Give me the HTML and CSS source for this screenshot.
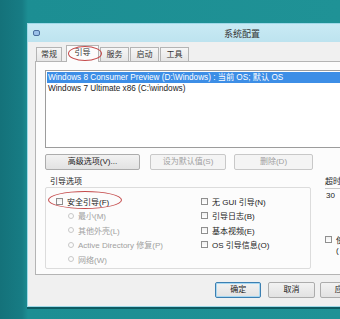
FILE: index.html
```html
<!DOCTYPE html>
<html lang="zh-CN">
<head>
    <meta charset="UTF-8">
    <title>系统配置</title>
    <link rel="stylesheet" href="styles.css">
</head>
<body>
    <div class="desktop">
        <div class="window">
            <div class="titlebar">
                <span class="app-icon"></span>
                <span class="title">系统配置</span>
            </div>

            <div class="tabs">
                <div class="tab">常规</div>
                <div class="tab tab-on">引导<span class="mark mark-tab"></span></div>
                <div class="tab">服务</div>
                <div class="tab">启动</div>
                <div class="tab">工具</div>
            </div>

            <div class="panel">
                <div class="boot-list">
                    <div class="boot-item selected">Windows 8 Consumer Preview (D:\Windows) : 当前 OS; 默认 OS</div>
                    <div class="boot-item">Windows 7 Ultimate x86 (C:\windows)</div>
                </div>

                <div class="btn-row">
                    <div class="btn btn-adv">高级选项(V)...</div>
                    <div class="btn btn-def disabled">设为默认值(S)</div>
                    <div class="btn btn-del disabled">删除(D)</div>
                </div>

                <div class="options">
                    <div class="group">
                        <div class="group-label">引导选项</div>
                        <div class="group-box">
                            <div class="col col-left">
                                <div class="opt opt-safe"><span class="chk"></span>安全引导(F)<span class="mark mark-safe"></span></div>
                                <div class="opt sub disabled"><span class="radio"></span>最小(M)</div>
                                <div class="opt sub disabled"><span class="radio"></span>其他外壳(L)</div>
                                <div class="opt sub disabled"><span class="radio"></span>Active Directory 修复(P)</div>
                                <div class="opt sub disabled"><span class="radio"></span>网络(W)</div>
                            </div>
                            <div class="col col-right">
                                <div class="opt"><span class="chk"></span>无 GUI 引导(N)</div>
                                <div class="opt"><span class="chk"></span>引导日志(B)</div>
                                <div class="opt"><span class="chk"></span>基本视频(E)</div>
                                <div class="opt"><span class="chk"></span>OS 引导信息(O)</div>
                            </div>
                        </div>
                    </div>
                    <div class="timeout">
                        <div class="timeout-label">超时</div>
                        <div class="timeout-box">30</div>
                        <div class="opt perm"><span class="chk"></span>使</div>
                        <div class="perm-2">(</div>
                    </div>
                </div>
            </div>

            <div class="footer">
                <div class="btn btn-ok">确定</div>
                <div class="btn btn-cancel">取消</div>
                <div class="btn btn-apply">应用</div>
            </div>
        </div>
    </div>
</body>
</html>
```

FILE: styles.css
```css
*{
    padding: 0;
    margin: 0;
    box-sizing: border-box;
}
body{
    width: 340px;
    height: 319px;
    overflow: hidden;
    background: linear-gradient(90deg, #14727a 0, #177c84 22px, #1c8e93 28px, #1f9296 100%);
    font-family: "Liberation Sans", "Noto Sans CJK SC", sans-serif;
    font-size: 8.5px;
    color: #222;
}
.desktop{
    padding: 23px 0 0 27px;
}
.window{
    width: 340px;
    height: 284px;
    background: #f0f0f0;
    border: 1px solid #9fd9e8;
    box-shadow: 0 2px 0 #0f5c63;
    display: flex;
    flex-direction: column;
}

/* title bar */
.titlebar{
    height: 18px;
    background: linear-gradient(#c9eaf4, #bde3ef);
    display: flex;
    align-items: center;
    padding-left: 5px;
}
.app-icon{
    width: 7px;
    height: 6px;
    border: 1px solid #4b6f9e;
    border-radius: 2px;
    background: #9bc0e8;
}
.title{
    margin-left: 184px;
    font-size: 9px;
    color: #333;
}

/* tabs */
.tabs{
    display: flex;
    align-items: flex-end;
    height: 20px;
    padding-left: 8px;
    margin-bottom: -1px;
}
.tab{
    height: 15px;
    line-height: 14px;
    border: 1px solid #b4b4b4;
    border-bottom: none;
    background: linear-gradient(#f6f6f6, #e4e4e4);
    margin-right: 1px;
    width: 29px;
    text-align: center;
    font-size: 8px;
    color: #333;
    white-space: nowrap;
}
.tab:first-child{
    width: 26px;
    margin-right: 4px;
}
.tab-on{
    position: relative;
    height: 17px;
    width: 33px;
    background: #fcfcfc;
    margin-right: 1px;
}
.mark{
    position: absolute;
    border: 1px solid #c4494a;
    border-radius: 50%;
}
.mark-tab{
    left: 1px;
    top: 0;
    width: 34px;
    height: 15px;
}

/* panel */
.panel{
    margin-left: 7px;
    height: 214px;
    border: 1px solid #b4b4b4;
    background: #fcfcfc;
    padding: 8px 0 0 9px;
}
.boot-list{
    height: 78px;
    width: 310px;
    border: 1px solid #9c9c9c;
    background: #fff;
    padding: 1px 0 0 1px;
    font-size: 8.2px;
}
.boot-item{
    height: 11px;
    line-height: 11px;
    padding-left: 1px;
    white-space: nowrap;
}
.boot-item.selected{
    background: #3d8ee6;
    color: #fff;
}

.btn-row{
    display: flex;
    margin-top: 6px;
}
.btn{
    height: 16px;
    line-height: 14px;
    border: 1px solid #acacac;
    border-radius: 2px;
    background: linear-gradient(#f2f2f2, #e2e2e2);
    text-align: center;
    font-size: 8px;
}
.btn-adv{
    width: 95px;
}
.btn-def{
    width: 76px;
    margin-left: 10px;
}
.btn-del{
    width: 79px;
    margin-left: 8px;
}
.disabled{
    color: #a0a0a0;
}
.btn.disabled{
    background: #f4f4f4;
    border-color: #c8c8c8;
}

/* boot options */
.options{
    display: flex;
    margin-top: 7px;
}
.group{
    width: 268px;
}
.group-label{
    height: 10px;
    line-height: 10px;
    padding-left: 5px;
    font-size: 8px;
}
.group-box{
    height: 82px;
    border: 1px solid #dcdcdc;
    border-radius: 2px;
    display: flex;
    padding: 6px 0 0 10px;
}
.col-left{
    width: 145px;
}
.opt{
    display: flex;
    align-items: center;
    height: 14.5px;
    font-size: 8px;
    white-space: nowrap;
}
.opt-safe{
    position: relative;
}
.mark-safe{
    left: -8px;
    top: -3px;
    width: 74px;
    height: 18px;
}
.sub{
    padding-left: 12px;
}
.chk{
    width: 7px;
    height: 7px;
    border: 1px solid #8f8f8f;
    background: linear-gradient(#f0f0f0, #fff);
    margin-right: 4px;
    flex-shrink: 0;
}
.radio{
    width: 6px;
    height: 6px;
    border: 1px solid #c8c8c8;
    border-radius: 50%;
    margin-right: 4px;
}

.timeout{
    margin-left: 14px;
    font-size: 8px;
}
.timeout-label{
    height: 10px;
    line-height: 10px;
}
.timeout-box{
    margin-top: 1px;
    border-top: 1px solid #c8c8c8;
    width: 40px;
    height: 14px;
    line-height: 13px;
    padding-left: 1px;
}
.perm{
    margin-top: 30px;
}
.perm-2{
    padding-left: 11px;
    line-height: 8px;
}

/* footer buttons */
.footer{
    display: flex;
    padding: 7px 0 0 187px;
}
.btn-ok{
    width: 55px;
    border-color: #3c7fb1;
    box-shadow: inset 0 0 0 1px #a8d8f2;
}
.btn-cancel{
    width: 55px;
    margin-left: 7px;
}
.btn-apply{
    width: 55px;
    margin-left: 5px;
}
```
